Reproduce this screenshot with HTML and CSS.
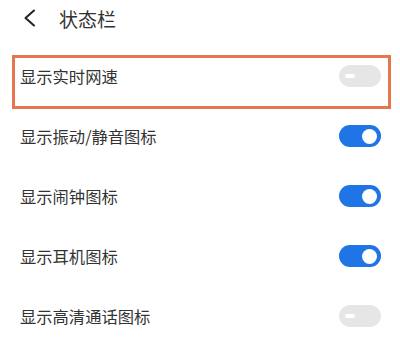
FILE: index.html
```html
<!DOCTYPE html>
<html lang="zh">
<head>
<meta charset="utf-8">
<link rel="stylesheet" href="styles.css">
</head>
<body>
<div class="page">
  <header class="header">
    <svg class="back" width="14" height="18" viewBox="0 0 14 18"><polyline points="11,1.5 2.5,9 11,16.5" fill="none" stroke="#222" stroke-width="2" stroke-linecap="round" stroke-linejoin="round"/></svg>
    <span class="title">状态栏</span>
  </header>
  <div class="list">
    <div class="row highlighted"><span class="label">显示实时网速</span><span class="toggle off"></span></div>
    <div class="row"><span class="label">显示振动/静音图标</span><span class="toggle on"></span></div>
    <div class="row"><span class="label">显示闹钟图标</span><span class="toggle on"></span></div>
    <div class="row"><span class="label">显示耳机图标</span><span class="toggle on"></span></div>
    <div class="row"><span class="label">显示高清通话图标</span><span class="toggle off"></span></div>
  </div>
</div>
</body>
</html>
```
FILE: styles.css
```css
html, body {
  margin: 0;
  padding: 0;
  background: #fff;
}
body {
  font-family: "Noto Sans CJK SC", "Noto Sans", sans-serif;
  color: #333;
  width: 400px;
  height: 354px;
  overflow: hidden;
}
.header {
  height: 36px;
  display: flex;
  align-items: center;
  padding-left: 23px;
}
.back {
  display: block;
}
.title {
  margin-left: 22px;
  font-size: 19px;
  color: #333;
  line-height: 1;
}
.list {
  padding-top: 10px;
}
.row {
  position: relative;
  height: 60px;
  display: flex;
  align-items: center;
  justify-content: space-between;
  padding: 0 19px 0 20px;
}
.label {
  font-size: 16.3px;
  line-height: 1;
  color: #333;
}
.highlighted::after {
  content: "";
  position: absolute;
  left: 12px;
  top: 9px;
  width: 379px;
  height: 54px;
  box-sizing: border-box;
  border: 3px solid #e4774f;
}
.toggle {
  position: relative;
  width: 42px;
  height: 22px;
  border-radius: 11px;
  flex: none;
}
.toggle.on {
  background: #1f74e6;
}
.toggle.on::after {
  content: "";
  position: absolute;
  right: 4px;
  top: 3.5px;
  width: 15px;
  height: 15px;
  border-radius: 50%;
  background: #fff;
}
.toggle.off {
  background: #e6e6e6;
}
.toggle.off::after {
  content: "";
  position: absolute;
  left: 6px;
  top: 9px;
  width: 10px;
  height: 4px;
  border-radius: 2px;
  background: #fff;
}
```
